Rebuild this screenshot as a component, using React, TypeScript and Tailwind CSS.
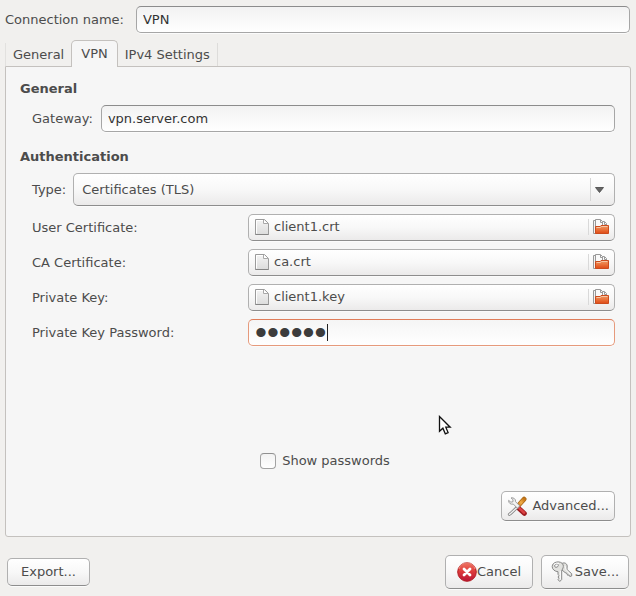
import { useState, type ReactNode } from "react";

const raised =
  "rounded-[5px] border border-[#b0b0b0] border-b-[#8d8d8d] bg-linear-to-b from-white via-[#f8f8f8] to-[#ebeaea] shadow-[0_1px_0_#fbfbfb]";
const entry =
  "h-[27px] min-w-0 flex-1 rounded-[5px] border border-[#a6a6a6] border-t-[#8c8c8c] bg-linear-to-b from-[#f2f2f2] to-white px-1.5 text-[#333] shadow-[0_1px_0_#fbfbfb] outline-none";

function PageIcon() {
  return (
    <svg width="14" height="16" viewBox="0 0 14 16" aria-hidden="true">
      <defs>
        <linearGradient id="sheet" x1="0" y1="0" x2="0" y2="1">
          <stop offset="0" stopColor="#f4f4f4" />
          <stop offset="1" stopColor="#dcdcdc" />
        </linearGradient>
      </defs>
      <path d="M.5 .5H9.5L13.5 4.5V15.5H.5Z" fill="url(#sheet)" stroke="#9b9b9b" />
      <path d="M1.5 14.5V1.5H8.5" fill="none" stroke="#fff" />
      <path d="M8.5 1V4.5H13" fill="#fff" stroke="#a8a8a8" />
      <path d="M.5 15.5H13.5" stroke="#858585" />
    </svg>
  );
}

function FolderIcon() {
  return (
    <svg width="16" height="16" viewBox="0 0 16 16" aria-hidden="true">
      <defs>
        <linearGradient id="folder" x1="0" y1="0" x2="0" y2="1">
          <stop offset="0" stopColor="#ee9a68" />
          <stop offset=".45" stopColor="#eb7840" />
          <stop offset="1" stopColor="#df4a16" />
        </linearGradient>
      </defs>
      <path d="M3.5 14.5H.5V1.5H2.5" fill="#f4f4f4" stroke="#999" />
      <path d="M6.5 8V2.5H11.5L13.5 4.5V8Z" fill="#fafafa" stroke="#999" />
      <path d="M2.5 8V.5H7.5L9.5 2.5V8Z" fill="#fafafa" stroke="#999" />
      <path d="M7.5 1V3.5H10M11.5 3V5.5H13.5" fill="none" stroke="#999" />
      <path d="M2.5 14.5V7.5H7L8 6.5H15.5V14.5Z" fill="url(#folder)" stroke="#cc4b1d" />
      <path d="M3.5 8.5H7.5L8.5 7.5H14.5" fill="none" stroke="#f6c6a4" />
    </svg>
  );
}

function ToolsIcon() {
  return (
    <svg width="20" height="20" viewBox="-1 -1 21 21" aria-hidden="true">
      <defs>
        <linearGradient id="grip" x1="1" y1="0" x2="0" y2="1">
          <stop offset="0" stopColor="#c77816" />
          <stop offset=".5" stopColor="#f0ad49" />
          <stop offset="1" stopColor="#c67519" />
        </linearGradient>
      </defs>
      <path d="M10.5 9.5L17 2.3" stroke="#a96719" strokeWidth="5" strokeLinecap="round" />
      <path d="M10.5 9.5L17 2.3" stroke="url(#grip)" strokeWidth="3.4" strokeLinecap="round" />
      <path d="M11 11.5L17.3 17.3" stroke="#9d1c20" strokeWidth="5" strokeLinecap="round" />
      <path d="M11 11L17 16.6" stroke="#dc4244" strokeWidth="2.6" strokeLinecap="round" />
      <path d="M9 11.5L3 17.2L1.5 18.3" stroke="#858585" strokeWidth="3.2" strokeLinecap="round" />
      <path d="M9 11.5L3 17.2L1.5 18.3" stroke="#f1f1f1" strokeWidth="1.4" strokeLinecap="round" />
      <path
        d="M3.2 1C5.8 .3 8.4 2.2 8 5L12.4 9.4L10 11.9L5.7 7.5C3 8.2 .4 6.4 .7 3.6L3.1 5.5L5.3 5L5.3 2.8Z"
        fill="#f3f3f3"
        stroke="#999"
      />
    </svg>
  );
}

function CancelIcon() {
  return (
    <svg width="20" height="20" viewBox="0 0 20 20" aria-hidden="true">
      <defs>
        <linearGradient id="stop" x1="0" y1="0" x2="0" y2="1">
          <stop offset="0" stopColor="#f07663" />
          <stop offset=".45" stopColor="#de3d3c" />
          <stop offset="1" stopColor="#b91536" />
        </linearGradient>
      </defs>
      <circle cx="10" cy="10" r="9.3" fill="url(#stop)" stroke="#b32026" />
      <path d="M2 7A8.3 8.3 0 0 1 18 7" fill="none" stroke="#f49b8b" strokeWidth=".8" />
      <path d="M7 7L13 13M13 7L7 13" stroke="#fff" strokeWidth="2.8" strokeLinecap="round" />
    </svg>
  );
}

function KeysIcon() {
  return (
    <svg width="22" height="22" viewBox="0 0 22 22" aria-hidden="true">
      <g fill="#e2e2df" stroke="#888" strokeLinejoin="round">
        <path d="M10 3.2C12.5 .8 16 2 16.2 5L16 8.5L20.7 12.7V15L18.8 15.5L18 14L16.5 14.2L16 12.5L14 11.5L11 9Z" />
        <path
          fillRule="evenodd"
          d="M5 1.2C7.8 .2 11.4 1.4 12.2 4C12.7 6 11.8 8 10.7 9.3V18.5L8.8 20.5L7 18.7L8 17.3L7 16L8 14.7L7 13.3V10.7C4 10.5 1.2 8.5 1.2 5.7C1.2 3.3 2.8 1.8 5 1.2ZM4.8 3.3C3.2 4 3.2 6 4.8 6.3C6.6 6.5 7.8 4.8 7.2 3.6C6.6 2.6 5.6 2.9 4.8 3.3Z"
        />
      </g>
      <path d="M9.3 10V18.5M3 3.5Q5 1.5 8 2.4" fill="none" stroke="#fff" />
      <path d="M14 5L15 8.5L19 13" fill="none" stroke="#fafafa" />
    </svg>
  );
}

function FileRow({ id, label, file }: { id: string; label: string; file: string }) {
  return (
    <div className="flex items-center">
      <label htmlFor={id} className="w-[216px] shrink-0">
        {label}
      </label>
      <button id={id} type="button" className={`${raised} flex h-[27px] min-w-0 flex-1 items-center pr-[5px] pb-px pl-1.5`}>
        <PageIcon />
        <span className="ml-[5px] flex-1 text-left">{file}</span>
        <span className="mr-1 h-4 w-px bg-[#d9d9d9]" />
        <FolderIcon />
      </button>
    </div>
  );
}

function ActionButton({ icon, className, children }: { icon?: ReactNode; className: string; children: ReactNode }) {
  return (
    <button type="button" className={`${raised} flex items-center justify-center ${className}`}>
      {icon}
      {children}
    </button>
  );
}

export default function App() {
  const [name, setName] = useState("VPN");
  const [gateway, setGateway] = useState("vpn.server.com");
  const [password, setPassword] = useState("secret");
  const [show, setShow] = useState(false);

  return (
    <form
      onSubmit={(e) => e.preventDefault()}
      className="relative min-h-screen bg-[#f1f0ee] pt-1.5 pb-[7px] font-['DejaVu_Sans',sans-serif] text-[13px] leading-[18px] text-[#4c4c4c]"
    >
      <div className="flex items-center gap-3 pr-1.5 pl-[5px]">
        <label htmlFor="name">Connection name:</label>
        <input id="name" className={entry} value={name} onChange={(e) => setName(e.target.value)} />
      </div>

      <div className="mx-[5px] mt-[7px]">
        <div role="tablist" className="flex items-end">
          <button type="button" role="tab" aria-selected="false" className="h-[23px] border-l border-[#e2e1df] px-[7px]">
            General
          </button>
          <button
            type="button"
            role="tab"
            aria-selected="true"
            className="relative -mb-px h-[27px] rounded-t-[5px] border border-b-0 border-[#c4c1be] bg-[#f6f6f6] px-[9px]"
          >
            VPN
          </button>
          <button type="button" role="tab" aria-selected="false" className="h-[23px] border-r border-[#dddcda] px-[7px]">
            IPv4 Settings
          </button>
        </div>

        <div role="tabpanel" className="rounded-b-[3px] rounded-tr-[3px] border border-[#c4c1be] bg-[#f6f6f6] pt-[13px] pr-[15px] pb-[15px] pl-3.5">
          <h2 className="font-bold">General</h2>
          <div className="mt-[7px] flex items-center gap-2 pl-3">
            <label htmlFor="gateway">Gateway:</label>
            <input id="gateway" className={entry} value={gateway} onChange={(e) => setGateway(e.target.value)} />
          </div>

          <h2 className="mt-4 font-bold">Authentication</h2>
          <div className="mt-[7px] flex flex-col gap-2 pl-3">
            <div className="flex items-center gap-[7px]">
              <label htmlFor="type">Type:</label>
              <div className="relative flex min-w-0 flex-1">
                <select id="type" className={`${raised} h-[33px] w-full appearance-none px-2 outline-none`}>
                  <option>Certificates (TLS)</option>
                </select>
                <span className="pointer-events-none absolute inset-y-[5px] right-0 flex w-[25px] items-center border-l border-[#d6d6d6] pl-1">
                  <svg width="9" height="6" viewBox="0 0 9 6" aria-hidden="true">
                    <path d="M.5 .5H8.5L4.5 5.5Z" fill="#666" stroke="#444" strokeWidth=".8" />
                  </svg>
                </span>
              </div>
            </div>
            <FileRow id="user-cert" label="User Certificate:" file="client1.crt" />
            <FileRow id="ca-cert" label="CA Certificate:" file="ca.crt" />
            <FileRow id="private-key" label="Private Key:" file="client1.key" />
            <div className="flex items-center">
              <label htmlFor="password" className="w-[216px] shrink-0">
                Private Key Password:
              </label>
              <div className="relative flex min-w-0 flex-1">
                <input
                  id="password"
                  type={show ? "text" : "password"}
                  value={password}
                  onChange={(e) => setPassword(e.target.value)}
                  className={`h-[27px] w-full rounded-[5px] border border-[#e69a7c] border-t-[#df7d5a] bg-linear-to-b from-[#f5f5f5] to-white px-1.5 text-[#3c3c3c] caret-transparent shadow-[0_1px_0_#fbfbfb] outline-none ${
                    show ? "" : "font-['Liberation_Sans',sans-serif] text-[34px]"
                  }`}
                />
                <span className="absolute top-[5px] left-[79px] h-[17px] w-px bg-[#222]" />
              </div>
            </div>
          </div>

          <label className="mx-auto mt-[106px] flex w-fit items-center gap-1.5 pl-[15px]">
            <input
              type="checkbox"
              checked={show}
              onChange={(e) => setShow(e.target.checked)}
              className="size-4 appearance-none rounded border border-[#a3a3a3] border-t-[#909090] bg-linear-to-b from-[#f3f3f3] to-white checked:bg-[#dd6f45]"
            />
            Show passwords
          </label>

          <div className="mt-[21px] flex justify-end">
            <ActionButton icon={<ToolsIcon />} className="h-[30px] gap-[5px] px-[5px]">
              Advanced...
            </ActionButton>
          </div>
        </div>
      </div>

      <div className="mt-[18px] flex items-center gap-2 px-[7px]">
        <ActionButton className="h-7 px-[13px]">Export...</ActionButton>
        <span className="flex-1" />
        <ActionButton icon={<CancelIcon />} className="h-[34px] w-[88px]">
          Cancel
        </ActionButton>
        <ActionButton icon={<KeysIcon />} className="h-[34px] w-[88px] gap-0.5">
          Save...
        </ActionButton>
      </div>

      <svg
        className="pointer-events-none absolute top-[415px] left-[438px]"
        width="15"
        height="22"
        viewBox="0 0 15 22"
        aria-hidden="true"
      >
        <path d="M1.5 1.5V16.3L4.9 13.2L7.3 18.8L10.1 17.6L7.8 12.2H12.2Z" fill="#fff" stroke="#111" strokeWidth="1.3" />
      </svg>
    </form>
  );
}
